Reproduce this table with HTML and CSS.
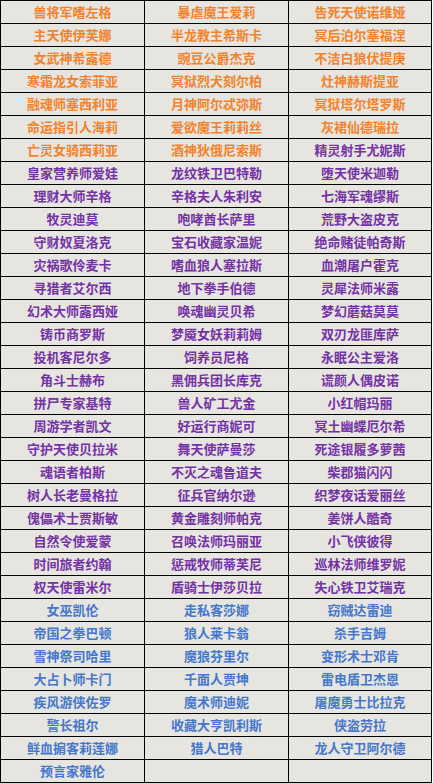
FILE: index.html
```html
<!DOCTYPE html>
<html lang="zh">
<head>
<meta charset="utf-8">
<link rel="stylesheet" href="styles.css">
</head>
<body>
<div class="grid">
<div class="c o">兽将军嗜左格</div><div class="c o">暴虐魔王爱莉</div><div class="c o">告死天使诺维娅</div>
<div class="c o">主天使伊芙娜</div><div class="c o">半龙教主希斯卡</div><div class="c o">冥后泊尔塞福涅</div>
<div class="c o">女武神希露德</div><div class="c o">豌豆公爵杰克</div><div class="c o">不洁白狼伏提庚</div>
<div class="c o">寒霜龙女索菲亚</div><div class="c o">冥狱烈犬刻尔柏</div><div class="c o">灶神赫斯提亚</div>
<div class="c o">融魂师塞西利亚</div><div class="c o">月神阿尔忒弥斯</div><div class="c o">冥狱塔尔塔罗斯</div>
<div class="c o">命运指引人海莉</div><div class="c o">爱欲魔王莉莉丝</div><div class="c o">灰裙仙德瑞拉</div>
<div class="c o">亡灵女骑西莉亚</div><div class="c o">酒神狄俄尼索斯</div><div class="c p">精灵射手尤妮斯</div>
<div class="c p">皇家营养师爱娃</div><div class="c p">龙纹铁卫巴特勒</div><div class="c p">堕天使米迦勒</div>
<div class="c p">理财大师辛格</div><div class="c p">辛格夫人朱利安</div><div class="c p">七海军魂缪斯</div>
<div class="c p">牧灵迪莫</div><div class="c p">咆哮酋长萨里</div><div class="c p">荒野大盗皮克</div>
<div class="c p">守财奴夏洛克</div><div class="c p">宝石收藏家温妮</div><div class="c p">绝命赌徒帕奇斯</div>
<div class="c p">灾祸歌伶麦卡</div><div class="c p">嗜血狼人塞拉斯</div><div class="c p">血潮屠户霍克</div>
<div class="c p">寻猎者艾尔西</div><div class="c p">地下拳手伯德</div><div class="c p">灵犀法师米露</div>
<div class="c p">幻术大师露西娅</div><div class="c p">唤魂幽灵贝希</div><div class="c p">梦幻蘑菇莫莫</div>
<div class="c p">铸币商罗斯</div><div class="c p">梦魇女妖莉莉姆</div><div class="c p">双刃龙匪库萨</div>
<div class="c p">投机客尼尔多</div><div class="c p">饲养员尼格</div><div class="c p">永眠公主爱洛</div>
<div class="c p">角斗士赫布</div><div class="c p">黑佣兵团长库克</div><div class="c p">谎颜人偶皮诺</div>
<div class="c p">拼尸专家基特</div><div class="c p">兽人矿工尤金</div><div class="c p">小红帽玛丽</div>
<div class="c p">周游学者凯文</div><div class="c p">好运行商妮可</div><div class="c p">冥土幽蝶厄尔希</div>
<div class="c p">守护天使贝拉米</div><div class="c p">舞天使萨曼莎</div><div class="c p">死途银履多萝茜</div>
<div class="c p">魂语者柏斯</div><div class="c p">不灭之魂鲁道夫</div><div class="c p">柴郡猫闪闪</div>
<div class="c p">树人长老曼格拉</div><div class="c p">征兵官纳尔逊</div><div class="c p">织梦夜话爱丽丝</div>
<div class="c p">傀儡术士贾斯敏</div><div class="c p">黄金雕刻师帕克</div><div class="c p">姜饼人酷奇</div>
<div class="c p">自然令使爱蒙</div><div class="c p">召唤法师玛丽亚</div><div class="c p">小飞侠彼得</div>
<div class="c p">时间旅者约翰</div><div class="c p">惩戒牧师蒂芙尼</div><div class="c p">巡林法师维罗妮</div>
<div class="c p">权天使雷米尔</div><div class="c p">盾骑士伊莎贝拉</div><div class="c p">失心铁卫艾瑞克</div>
<div class="c b">女巫凯伦</div><div class="c b">走私客莎娜</div><div class="c b">窃贼达雷迪</div>
<div class="c b">帝国之拳巴顿</div><div class="c b">狼人莱卡翁</div><div class="c b">杀手吉姆</div>
<div class="c b">雪神祭司哈里</div><div class="c b">魔狼芬里尔</div><div class="c b">变形术士邓肯</div>
<div class="c b">大占卜师卡门</div><div class="c b">千面人贾坤</div><div class="c b">雷电盾卫杰恩</div>
<div class="c b">疾风游侠佐罗</div><div class="c b">魔术师迪妮</div><div class="c b">屠魔勇士比拉克</div>
<div class="c b">警长祖尔</div><div class="c b">收藏大亨凯利斯</div><div class="c b">侠盗劳拉</div>
<div class="c b">鲜血掮客莉莲娜</div><div class="c b">猎人巴特</div><div class="c b">龙人守卫阿尔德</div>
<div class="c b">预言家雅伦</div><div class="c b"></div><div class="c b"></div>
</div>
</body>
</html>
```

FILE: styles.css
```css
html, body {
  margin: 0;
  padding: 0;
  background: #ffffff;
}

.grid {
  display: grid;
  grid-template-columns: 144px 144px 143px;
  grid-auto-rows: 23px;
  width: 431px;
  border-left: 1px solid #000;
  border-top: 1px solid #000;
  background: #e6e5e0;
  font-family: "Noto Sans CJK SC", "Noto Sans", sans-serif;
  font-size: 13px;
  font-weight: bold;
}

.c {
  border-right: 1px solid #000;
  border-bottom: 1px solid #000;
  display: flex;
  align-items: center;
  justify-content: center;
  line-height: 22px;
  white-space: nowrap;
}

.o { color: #f2832c; }
.p { color: #7432a6; }
.b { color: #4577cc; }
```
